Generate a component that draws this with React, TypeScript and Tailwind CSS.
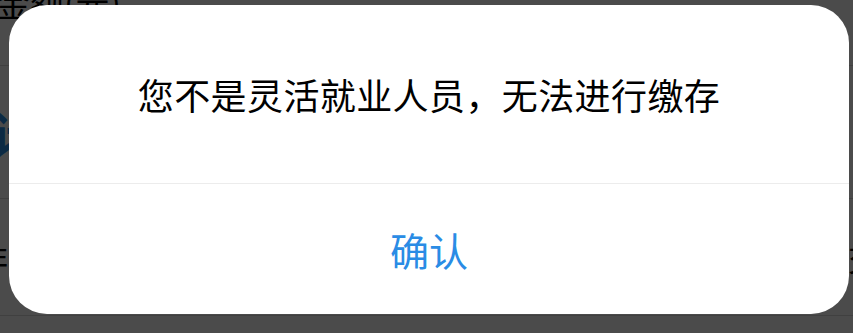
import React from "react";

const cjk = { fontFamily: '"Noto Sans CJK SC", "Noto Sans", sans-serif' };

export default function App() {
  return (
    <div className="relative w-[853px] h-[333px] overflow-hidden bg-white" style={cjk}>
      {/* page behind the dialog */}
      <div className="flex flex-col w-full">
        <div className="h-[66px] flex items-start border-b border-[#d8d8d8]">
          <span className="text-[34px] leading-[34px] text-black -ml-[4px] -mt-[14px]">金额(元)</span>
        </div>
        <div className="h-[133px] flex items-center border-b border-[#d8d8d8]">
          <span className="text-[48px] leading-none font-bold text-[#2b8ee8] -ml-[58px]">合计</span>
        </div>
        <div className="h-[117px] flex items-center justify-between border-b border-[#d8d8d8]">
          <span className="text-[32px] leading-none text-black -ml-[24px]">非非</span>
          <span className="text-[32px] leading-none text-black -mr-[27px]">缴交</span>
        </div>
      </div>

      {/* dim overlay */}
      <div className="absolute inset-0 bg-black/[0.705]" />

      {/* dialog */}
      <div className="absolute left-[9px] top-[5px] w-[840px] h-[309px] bg-white rounded-[38px] flex flex-col overflow-hidden">
        <div className="h-[179px] flex items-center justify-center border-b border-[#ececec]">
          <span className="text-[36px] leading-none text-black tracking-[0.4px]">
            您不是灵活就业人员，无法进行缴存
          </span>
        </div>
        <button className="flex-1 flex items-center justify-center text-[39px] leading-none text-[#2a8ce5]">
          确认
        </button>
      </div>
    </div>
  );
}
